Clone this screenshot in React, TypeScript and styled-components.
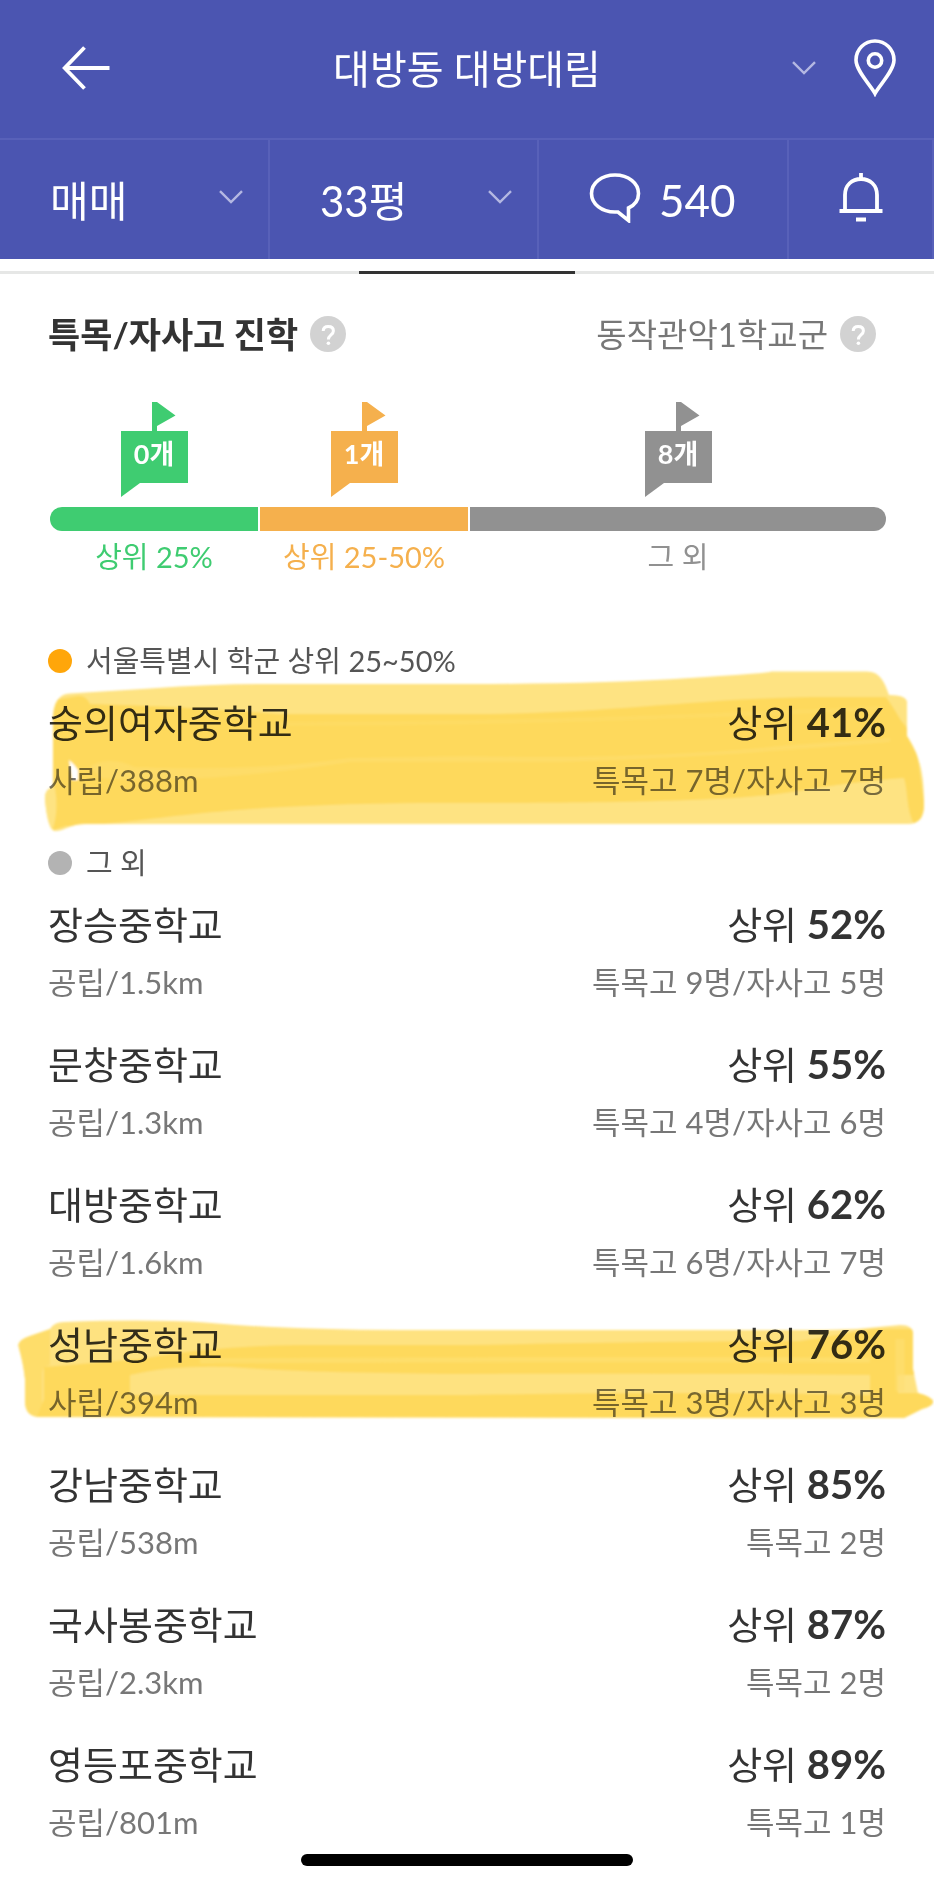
import React from 'react';
import styled, { createGlobalStyle } from 'styled-components';

const GlobalStyle = createGlobalStyle`
  * { box-sizing: border-box; }
  body { margin: 0; background: #fff; }
  body, button, select {
    font-family: Lato, "Noto Sans CJK KR", sans-serif;
  }
  h1, h2, h3, p, ul { margin: 0; padding: 0; font-weight: 400; }
  ul { list-style: none; }
  svg { display: block; flex: none; }
`;

const Page = styled.div`
  min-height: 100vh;
  color: #333;
`;

const Header = styled.header`
  background: #4b55b1;
  color: #fff;
`;

const TopBar = styled.div`
  display: grid;
  grid-template-columns: 1fr auto 1fr;
  align-items: center;
  height: 138px;
  padding: 0 38px 2px 62px;
`;

const TopActions = styled.div<{ $end?: boolean }>`
  display: flex;
  align-items: center;
  gap: 38px;
  justify-content: ${(p) => (p.$end ? 'flex-end' : 'flex-start')};
`;

const PageTitle = styled.h1`
  margin: 2px 24px 0 0;
  font-size: 40px;
  line-height: 56px;
  white-space: nowrap;
`;

const IconButton = styled.button`
  display: flex;
  align-items: center;
  justify-content: center;
  padding: 0;
  border: 0;
  background: none;
  color: inherit;
  cursor: pointer;
`;

const FilterBar = styled.div`
  display: grid;
  grid-template-columns: 270fr 269fr 250fr 145fr;
  height: 121px;
  border-top: 2px solid #5861b9;
`;

const filterCell = `
  border: 0;
  border-right: 2px solid #5861b9;
  background: none;
  color: #fff;
`;

const SelectCell = styled.label`
  ${filterCell}
  display: grid;
  align-items: center;
  min-width: 0;

  & > * { grid-area: 1 / 1; }
  & > svg {
    justify-self: end;
    margin: 0 25px 6px 0;
    pointer-events: none;
  }
`;

const FilterSelect = styled.select`
  appearance: none;
  width: 100%;
  height: 100%;
  padding: 2px 52px 0 50px;
  border: 0;
  background: none;
  color: inherit;
  font-size: 42px;
`;

const FilterButton = styled.button<{ $icon?: boolean }>`
  ${filterCell}
  display: flex;
  align-items: center;
  justify-content: ${(p) => (p.$icon ? 'center' : 'flex-start')};
  gap: 18px;
  padding: 0 0 0 ${(p) => (p.$icon ? 0 : 50)}px;
  font-size: 44px;
  cursor: pointer;

  & > svg { margin-bottom: 4px; }
`;

const TabTrack = styled.div`
  display: flex;
  justify-content: center;
  margin-top: 12px;
  height: 3px;
  background: #e6e7e6;
`;

const TabMarker = styled.div`
  width: 216px;
  background: #333;
`;

const Main = styled.main`
  padding: 38px 48px 39px;
`;

const SectionHead = styled.div`
  display: flex;
  align-items: center;
  justify-content: space-between;
  padding-right: 10px;
`;

const HeadGroup = styled.div`
  display: flex;
  align-items: center;
  gap: 12px;
  line-height: 44px;
`;

const SectionTitle = styled.h2`
  font-size: 35px;
  font-weight: 700;
`;

const District = styled.p`
  font-size: 33px;
  color: #777;
`;

const HelpButton = styled.button`
  width: 36px;
  height: 36px;
  padding: 0;
  border: 0;
  border-radius: 50%;
  background: #d2d2d2;
  color: #fff;
  cursor: pointer;
`;

const Chart = styled.div`
  display: grid;
  grid-template-columns: 1fr 1fr 2fr;
  column-gap: 2px;
  margin: 46px 0 64px 2px;
`;

const Band = styled.div<{ $color: string }>`
  display: flex;
  flex-direction: column;
  align-items: center;
  color: ${(p) => p.$color};
`;

const BandBar = styled.div`
  align-self: stretch;
  height: 24px;
  margin: 10px 0 6px;
  background: currentColor;

  ${Band}:first-child > & { border-radius: 12px 0 0 12px; }
  ${Band}:last-child > & { border-radius: 0 12px 12px 0; }
`;

const BandLabel = styled.p`
  font-size: 29px;
  line-height: 40px;
`;

const FlagBox = styled.div`
  width: 67px;
  height: 52px;
  background: currentColor;
`;

const FlagCount = styled.p`
  color: #fff;
  font-size: 27px;
  font-weight: 700;
  line-height: 46px;
  text-align: center;
`;

const Group = styled.section`
  & + & { margin-top: 41px; }
`;

const GroupTitle = styled.h3<{ $dot: string }>`
  display: flex;
  align-items: center;
  gap: 14px;
  margin-bottom: 13px;
  color: #555;
  font-size: 29px;
  line-height: 40px;

  &::before {
    content: "";
    width: 24px;
    height: 24px;
    border-radius: 50%;
    background: ${(p) => p.$dot};
  }
`;

const SchoolList = styled.ul`
  display: flex;
  flex-direction: column;
  gap: 32px;
`;

const SchoolItem = styled.li`
  position: relative;
  display: flex;
  flex-direction: column;
  gap: 8px;
`;

const Line = styled.div`
  display: flex;
  justify-content: space-between;
  font-size: 38px;
  line-height: 56px;
`;

const Rank = styled.strong`
  font-size: 40px;
`;

const DetailLine = styled(Line)`
  color: #777;
  font-size: 31px;
  line-height: 44px;
`;

const Marker = styled.svg<{ $top: number }>`
  position: absolute;
  left: -48px;
  top: ${(p) => p.$top}px;
  width: calc(100% + 96px);
  mix-blend-mode: multiply;
  pointer-events: none;
`;

const HomeIndicator = styled.div`
  position: fixed;
  left: 50%;
  bottom: 19px;
  width: 332px;
  height: 12px;
  margin-left: -166px;
  border-radius: 6px;
  background: #000;
`;

const Chevron = () => (
  <svg width="24" height="14" viewBox="0 0 24 14" fill="none" stroke="#b4b8e2" strokeWidth="2.4">
    <path d="M1 1.2 12 12 23 1.2" />
  </svg>
);

const BackArrow = () => (
  <svg width="48" height="44" viewBox="0 0 48 44" fill="none" stroke="#fff" strokeWidth="3.8">
    <path d="M22.5 1.5 2.7 22l19.8 20.5M3 22h44.5" />
  </svg>
);

const Pin = () => (
  <svg width="42" height="58" viewBox="0 0 42 58" fill="none" stroke="#fff" strokeWidth="3.6">
    <path d="M21 54.500C17 46.500 2 32 2 21a19 19 0 0 1 38 0C40 32 25 46.500 21 54.500Z" />
    <circle cx="21" cy="21.500" r="6.700" />
  </svg>
);

const Bubble = () => (
  <svg width="52" height="50" viewBox="0 0 52 50" fill="none" stroke="#fff" strokeWidth="3.600">
    <path d="M26 2C12.500 2 2.500 10.200 2.500 20.500S12.500 39 26 39h3l10.500 8.500V35C46 32 49.500 26.700 49.500 20.500 49.500 10.200 39.500 2 26 2Z" />
  </svg>
);

const Bell = () => (
  <svg width="44" height="49" viewBox="0 0 44 49" fill="none" stroke="#fff" strokeWidth="3.800">
    <path d="M22 0v6M6 38V22C6 12 13 6 22 6s16 6 16 16v16M.5 38h43M17 46.500h10" />
  </svg>
);

const QuestionMark = () => (
  <svg width="36" height="36" viewBox="0 0 36 36" fill="none" stroke="#fff" strokeWidth="3">
    <path d="M13.200 15C13.300 12 15.200 10.500 18.200 10.500c3 0 5.200 1.600 5.200 4.400 0 4.100-5 4-5 8.600" />
    <circle cx="18.400" cy="27.200" r="1.800" fill="#fff" stroke="none" />
  </svg>
);

const Help = () => (
  <HelpButton type="button" aria-label="?">
    <QuestionMark />
  </HelpButton>
);

const Flag = ({ count }: { count: string }) => (
  <>
    <svg width="67" height="29" viewBox="0 0 67 29" fill="currentColor">
      <path d="M31 0h5l18.500 13.500L36 24v5h-5Z" />
    </svg>
    <FlagBox>
      <FlagCount>{count}</FlagCount>
    </FlagBox>
    <svg width="67" height="14" viewBox="0 0 67 14" fill="currentColor">
      <path d="M0 0h19L0 14Z" />
    </svg>
  </>
);

const WideMarker = () => (
  <Marker $top={-34} height="180" viewBox="0 660 934 180" preserveAspectRatio="none" aria-hidden="true">
    <defs>
      <filter id="wideEdge" x="-5%" y="-5%" width="110%" height="110%">
        <feGaussianBlur stdDeviation="1.2" />
      </filter>
      <clipPath id="wideClip">
        <path d="M53 720Q53 694 70 693.500L150 688.500Q210 684 260 684H467Q600 684 690 678T770 671.500H867C879 671.500 884 680 889 695Q907 695 907 703V736C921 758 924 775 924 805Q924 824 908 824H85C70 824 65 831 55 831Q48 831 45 800 44 790 53 786Z" />
      </clipPath>
    </defs>
    <g filter="url(#wideEdge)">
      <g clipPath="url(#wideClip)">
        <rect x="40" y="660" width="894" height="180" fill="#fee382" />
        <path d="M53 700 78 696Q86 695 90 704 180 706 280 714H467C620 714 700 697 830 697H886L915 740 924 800 924 824H914C906 810 908 790 904 778 800 786 800 797 690 800 600 803 540 803 450 803 200 803 150 824 66 826L53 830Z" fill="#fed95c" />
        <path d="M90 766Q110 755 135 767 250 772 350 758L467 756Q650 760 790 745L890 738 890 742Q700 758 560 762L350 762Q190 786 100 778Z" fill="#fee074" opacity=".5" />
        <path d="M280 724Q550 724 880 708" stroke="#fee074" strokeWidth="4" fill="none" opacity=".3" />
        <path d="M45 790 55 788Q59 812 52 831H45ZM889 696H908V728Q898 720 889 696Z" fill="#fee382" />
        <path d="M69 760Q74 764 78 770V780H72Z" fill="#fff" />
      </g>
    </g>
  </Marker>
);

const NarrowMarker = () => (
  <Marker $top={-17} height="140" viewBox="0 1300 934 140" preserveAspectRatio="none" aria-hidden="true">
    <defs>
      <filter id="narrowEdge" x="-5%" y="-5%" width="110%" height="110%">
        <feGaussianBlur stdDeviation="1.2" />
      </filter>
      <clipPath id="narrowClip">
        <path d="M18 1346Q20 1340 30 1337L50 1330Q54 1323 64 1323 150 1320 205 1323.500 290 1331 400 1331H800Q850 1331 868 1329L900 1326Q913 1326 913 1335V1370L918 1394Q933 1398 933 1403 933 1407 922 1410L904 1419H800L40 1418Q25 1418 25 1402V1380Q23 1362 18 1346Z" />
      </clipPath>
    </defs>
    <g filter="url(#narrowEdge)">
      <g clipPath="url(#narrowClip)">
        <rect x="0" y="1300" width="934" height="140" fill="#fee280" />
        <path d="M18 1340 50 1330V1366Q42 1368 42 1374V1418H25Z" fill="#fedd6b" />
        <path d="M44 1368 140 1360Q210 1347 300 1346H467Q700 1342 800 1342L872 1330H915V1376H870Q700 1374 467 1375 300 1374 230 1368 170 1366 130 1376 V1396H467Q700 1392 870 1396V1370H898V1394H934V1420H36L44 1400Z" fill="#fed95c" />
        <path d="M200 1362Q470 1360 870 1361" stroke="#fedf72" strokeWidth="5" fill="none" opacity=".7" />
        <path d="M900 1340V1392" stroke="#fee074" strokeWidth="9" fill="none" opacity=".6" />
      </g>
    </g>
  </Marker>
);

type School = {
  name: string;
  info: string;
  rank: string;
  result: string;
  marker?: React.ReactNode;
};

const bands = [
  { count: '0개', label: '상위 25%', color: '#3fcc71' },
  { count: '1개', label: '상위 25-50%', color: '#f5b04d' },
  { count: '8개', label: '그 외', color: '#919191' },
];

const groups: { title: string; dot: string; schools: School[] }[] = [
  {
    title: '서울특별시 학군 상위 25~50%',
    dot: '#ffa60a',
    schools: [
      { name: '숭의여자중학교', info: '사립/388m', rank: '41%', result: '특목고 7명/자사고 7명', marker: <WideMarker /> },
    ],
  },
  {
    title: '그 외',
    dot: '#b3b3b3',
    schools: [
      { name: '장승중학교', info: '공립/1.5km', rank: '52%', result: '특목고 9명/자사고 5명' },
      { name: '문창중학교', info: '공립/1.3km', rank: '55%', result: '특목고 4명/자사고 6명' },
      { name: '대방중학교', info: '공립/1.6km', rank: '62%', result: '특목고 6명/자사고 7명' },
      { name: '성남중학교', info: '사립/394m', rank: '76%', result: '특목고 3명/자사고 3명', marker: <NarrowMarker /> },
      { name: '강남중학교', info: '공립/538m', rank: '85%', result: '특목고 2명' },
      { name: '국사봉중학교', info: '공립/2.3km', rank: '87%', result: '특목고 2명' },
      { name: '영등포중학교', info: '공립/801m', rank: '89%', result: '특목고 1명' },
    ],
  },
];

export default function App() {
  return (
    <Page>
      <GlobalStyle />
      <Header>
        <TopBar>
          <TopActions>
            <IconButton type="button" aria-label="뒤로"><BackArrow /></IconButton>
          </TopActions>
          <PageTitle>대방동 대방대림</PageTitle>
          <TopActions $end>
            <IconButton type="button" aria-label="단지 선택"><Chevron /></IconButton>
            <IconButton type="button" aria-label="지도"><Pin /></IconButton>
          </TopActions>
        </TopBar>
        <FilterBar>
          <SelectCell>
            <FilterSelect aria-label="거래 유형"><option>매매</option></FilterSelect>
            <Chevron />
          </SelectCell>
          <SelectCell>
            <FilterSelect aria-label="평형"><option>33평</option></FilterSelect>
            <Chevron />
          </SelectCell>
          <FilterButton type="button"><Bubble />540</FilterButton>
          <FilterButton type="button" $icon aria-label="알림"><Bell /></FilterButton>
        </FilterBar>
      </Header>
      <TabTrack><TabMarker /></TabTrack>
      <Main>
        <SectionHead>
          <HeadGroup>
            <SectionTitle>특목/자사고 진학</SectionTitle>
            <Help />
          </HeadGroup>
          <HeadGroup>
            <District>동작관악1학교군</District>
            <Help />
          </HeadGroup>
        </SectionHead>
        <Chart>
          {bands.map((b) => (
            <Band key={b.label} $color={b.color}>
              <Flag count={b.count} />
              <BandBar />
              <BandLabel>{b.label}</BandLabel>
            </Band>
          ))}
        </Chart>
        {groups.map((g) => (
          <Group key={g.title}>
            <GroupTitle $dot={g.dot}>{g.title}</GroupTitle>
            <SchoolList>
              {g.schools.map((s) => (
                <SchoolItem key={s.name}>
                  <Line>
                    <p>{s.name}</p>
                    <p>상위 <Rank>{s.rank}</Rank></p>
                  </Line>
                  <DetailLine>
                    <p>{s.info}</p>
                    <p>{s.result}</p>
                  </DetailLine>
                  {s.marker}
                </SchoolItem>
              ))}
            </SchoolList>
          </Group>
        ))}
      </Main>
      <HomeIndicator />
    </Page>
  );
}
